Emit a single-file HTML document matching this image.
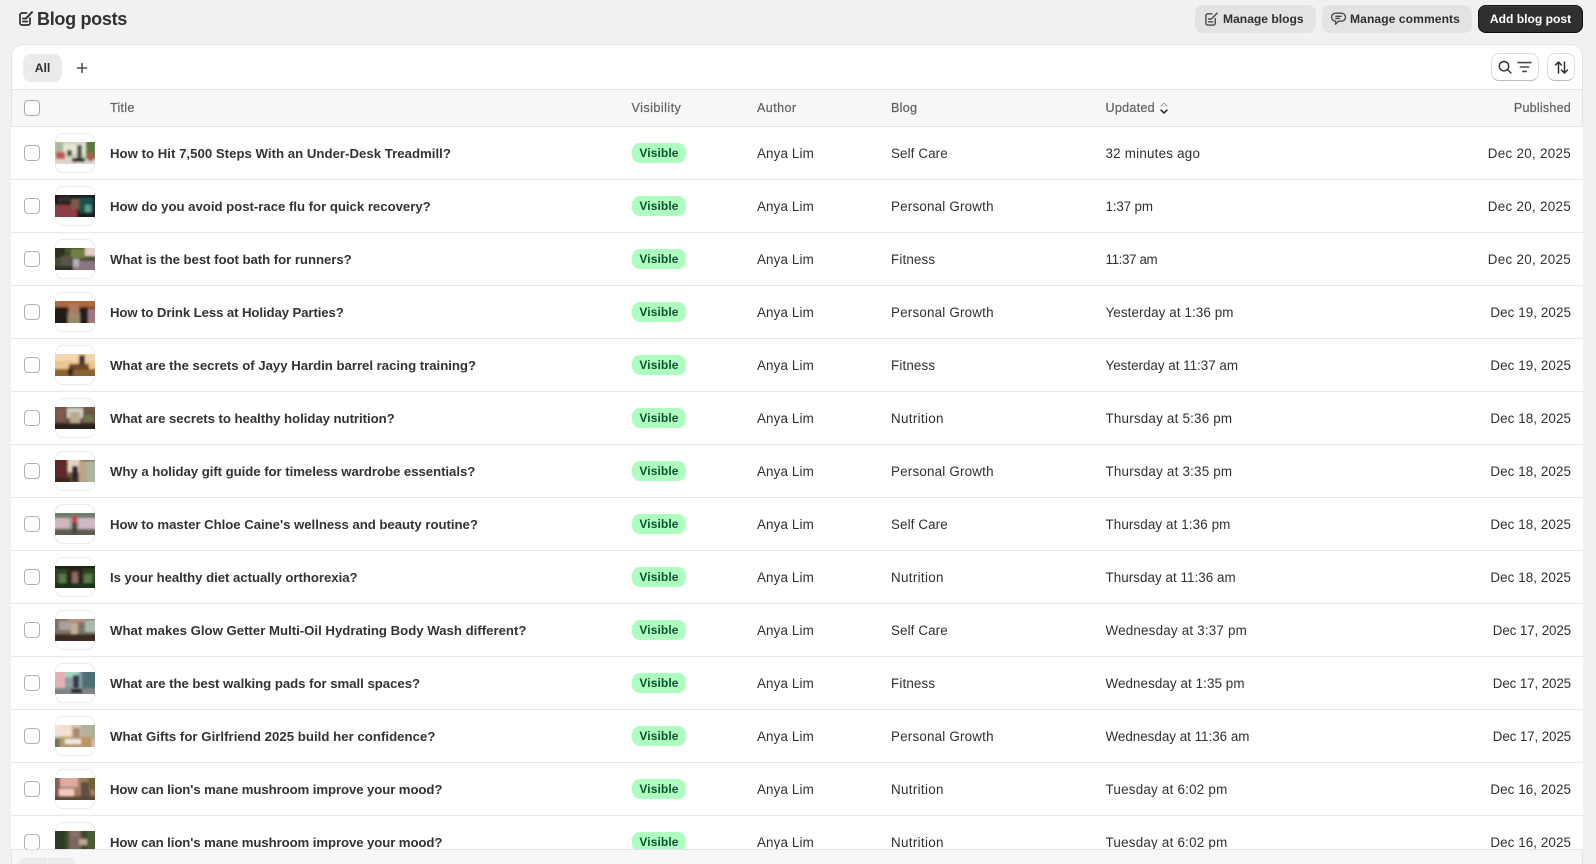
<!DOCTYPE html>
<html><head><meta charset="utf-8"><style>
*{box-sizing:border-box;margin:0;padding:0}
html,body{width:1596px;height:864px;overflow:hidden;background:#f1f1f1;font-family:"Liberation Sans",sans-serif;color:#303030}
#w{position:absolute;left:0;top:0;width:1596px;height:864px;overflow:hidden;background:#f1f1f1}
.abs{position:absolute;white-space:nowrap}
.card{position:absolute;left:11px;top:44px;width:1572px;height:830px;background:#fff;border:1px solid #e3e3e3;border-radius:12px;overflow:hidden}
.btn{position:absolute;top:5px;height:28px;border-radius:8px;background:#e3e3e3;font-size:12.1px;font-weight:bold;line-height:28px;color:#303030}
.row{position:absolute;left:11px;width:1572px;height:53px;border-bottom:1px solid #e8e8e8;background:#fff}
.cb{position:absolute;left:13px;top:18px;width:16px;height:16px;border:1px solid #b0b0b0;border-radius:4px;background:#fff}
.th{position:absolute;left:44px;top:6px;width:40px;height:40px;border:1px solid #ebebeb;border-radius:8px;background:#fff}
.th svg{position:absolute;left:-1px;top:8px;width:40px;height:22px;display:block}
.t{position:absolute;left:99px;top:18px;font-size:13.2px;font-weight:bold;line-height:17px;white-space:nowrap;color:#333;letter-spacing:-.03px}
.bd{position:absolute;left:621px;top:16px;width:54px;height:20px;border-radius:8px;background:#aefebf;color:#0c5132;font-size:12px;font-weight:bold;line-height:20.5px;text-align:center;letter-spacing:.1px}
.c{position:absolute;top:18px;font-size:13.4px;line-height:17px;white-space:nowrap;letter-spacing:.2px}
.au{left:746px;letter-spacing:.13px}.bl{left:880px}.up{left:1094.5px}
.pb{position:absolute;right:12px;left:auto;letter-spacing:.08px}
.h{position:absolute;top:100px;font-size:12.6px;line-height:16px;color:#616161;letter-spacing:.25px;white-space:nowrap;-webkit-text-stroke:.2px #616161}
</style></head><body><div id="w">
<svg width="0" height="0" style="position:absolute"><defs><filter id="b" x="-10%" y="-10%" width="120%" height="120%"><feGaussianBlur stdDeviation="1"/></filter></defs></svg>

<svg class="abs" style="left:18px;top:10px" width="16" height="17" viewBox="0 0 16 17" fill="none" stroke="#303030" stroke-width="1.7" stroke-linecap="round"><path d="M8.5 3H4a2 2 0 0 0-2 2v8a2 2 0 0 0 2 2h6a2 2 0 0 0 2-2V8"/><path d="M4.8 8.5h2.5M4.8 11.5h4.5"/><path d="M8 8.4 14 2.2" stroke-width="2"/></svg>
<div class="abs" style="left:37px;top:8px;font-size:18px;font-weight:bold;line-height:23px;letter-spacing:-.3px">Blog posts</div>

<div class="btn" style="left:1195px;width:121px"><svg class="abs" style="left:9px;top:6px" width="15" height="16" viewBox="0 0 16 17" fill="none" stroke="#4a4a4a" stroke-width="1.5" stroke-linecap="round"><path d="M8.5 3H4a2 2 0 0 0-2 2v8a2 2 0 0 0 2 2h6a2 2 0 0 0 2-2V8"/><path d="M4.8 8.5h2.5M4.8 11.5h4.5"/><path d="M8 8.4 14 2.2"/></svg><span class="abs" style="left:28px">Manage blogs</span></div>
<div class="btn" style="left:1322px;width:150px"><svg class="abs" style="left:9px;top:7px" width="15" height="14" viewBox="0 0 15 14" fill="none" stroke="#4a4a4a" stroke-width="1.4" stroke-linecap="round" stroke-linejoin="round"><path d="M4.5 1.2h6a3.5 3.5 0 0 1 0 8H7.5L4.6 12.2V9.1A3.5 3.5 0 0 1 4.5 1.2Z"/><path d="M4.8 4.3h5.4M4.8 6.4h3.6"/></svg><span class="abs" style="left:28px;letter-spacing:.07px">Manage comments</span></div>
<div class="btn" style="left:1478px;width:105px;background:#303030;color:#fff;box-shadow:inset 0 0 0 1px #111,inset 0 1.5px 0 #555;text-align:center">Add blog post</div>

<div class="card"></div>
<div class="abs" style="left:23px;top:54px;width:39px;height:28px;border-radius:8px;background:#ebebeb;font-size:12.2px;font-weight:bold;line-height:29px;text-align:center">All</div>
<svg class="abs" style="left:76px;top:62px" width="12" height="12" viewBox="0 0 12 12" stroke="#4a4a4a" stroke-width="1.5" stroke-linecap="round"><path d="M6 1.5v9M1.5 6h9"/></svg>

<div class="abs" style="left:1491px;top:53px;width:48px;height:28px;background:#fff;border:1px solid #dcdcdc;border-bottom-color:#bdbdbd;border-radius:8px"><svg class="abs" style="left:5px;top:6px" width="36" height="15" viewBox="0 0 36 15" fill="none" stroke="#303030" stroke-width="1.4" stroke-linecap="round"><circle cx="7" cy="6.2" r="4.7"/><path d="M10.6 9.8 14 13"/><path d="M21 2.6h13M23.4 7h8.2M25.8 11.4h3.4" stroke="#4a4a4a" stroke-width="1.6"/></svg></div>
<div class="abs" style="left:1547px;top:53px;width:28px;height:28px;background:#fff;border:1px solid #dcdcdc;border-bottom-color:#bdbdbd;border-radius:8px"><svg class="abs" style="left:6px;top:6px" width="15" height="15" viewBox="0 0 15 15" fill="none" stroke="#303030" stroke-width="1.5" stroke-linecap="round" stroke-linejoin="round"><path d="M4.5 13V2M1.5 5l3-3 3 3M10.5 2v11M7.5 10l3 3 3-3"/></svg></div>

<div class="abs" style="left:12px;top:89px;width:1570px;height:38px;background:#f7f7f7;border-top:1px solid #e3e3e3;border-bottom:1px solid #e3e3e3"></div>
<div class="abs" style="left:24px;top:100px;width:16px;height:16px;border:1px solid #a8a8a8;border-radius:4px;background:#fff"></div>
<div class="h" style="left:110px">Title</div>
<div class="h" style="left:631.5px;letter-spacing:.45px">Visibility</div>
<div class="h" style="left:757px;letter-spacing:.4px">Author</div>
<div class="h" style="left:891px">Blog</div>
<div class="h" style="left:1105.5px">Updated</div>
<svg class="abs" style="left:1159px;top:101px" width="10" height="14" viewBox="0 0 10 14" fill="none" stroke-linecap="round" stroke-linejoin="round"><path d="M2 5l3-3 3 3" stroke="#a0a0a0" stroke-width="1.1"/><path d="M2 9l3 3 3-3" stroke="#202020" stroke-width="1.5"/></svg>
<div class="h" style="right:25px;letter-spacing:.2px">Published</div>

<div class="row" style="top:127px"><div class="cb"></div><div class="th"><svg viewBox="0 0 40 22"><g filter="url(#b)"><rect x="-4" y="-4" width="48" height="30" fill="#cfd4bd"/><rect width="8" height="14" fill="#a9b89a"/><rect x="8" y="2" width="22" height="10" fill="#e4e4d4"/><rect x="31" y="-2" width="10" height="24" fill="#557a3e"/><rect x="1" y="10" width="9" height="8" fill="#c4554f"/><rect x="-2" y="17" width="44" height="7" fill="#ddd5cc"/><rect x="17" y="16" width="13" height="4" fill="#2a2a2a"/><rect x="22" y="3" width="5" height="13" fill="#4d5a44"/><rect x="12" y="8" width="5" height="6" fill="#3f5a3a"/><rect x="33" y="11" width="5" height="8" fill="#b9524c"/></g></svg></div><div class="t" style="letter-spacing:.02px">How to Hit 7,500 Steps With an Under-Desk Treadmill?</div><div class="bd">Visible</div><div class="c au">Anya Lim</div><div class="c bl" style="letter-spacing:.11px">Self Care</div><div class="c up" style="letter-spacing:.22px">32 minutes ago</div><div class="c pb" style="letter-spacing:.3px">Dec 20, 2025</div></div>

<div class="row" style="top:180px"><div class="cb"></div><div class="th"><svg viewBox="0 0 40 22"><g filter="url(#b)"><rect x="-4" y="-4" width="48" height="30" fill="#1e1a1c"/><rect x="-2" y="10" width="24" height="14" fill="#8c3e44"/><rect x="24" y="3" width="14" height="15" fill="#1c4f48"/><rect x="16" y="4" width="8" height="10" fill="#7d5a4c"/><rect x="3" y="2" width="12" height="5" fill="#3a2a30"/><rect x="30" y="10" width="6" height="7" fill="#5fa090"/></g></svg></div><div class="t" style="letter-spacing:-.02px">How do you avoid post-race flu for quick recovery?</div><div class="bd">Visible</div><div class="c au">Anya Lim</div><div class="c bl">Personal Growth</div><div class="c up" style="letter-spacing:-.15px">1:37 pm</div><div class="c pb" style="letter-spacing:.3px">Dec 20, 2025</div></div>

<div class="row" style="top:233px"><div class="cb"></div><div class="th"><svg viewBox="0 0 40 22"><g filter="url(#b)"><rect x="-4" y="-4" width="48" height="30" fill="#46502e"/><rect x="30" y="-2" width="12" height="10" fill="#e2cfc6"/><rect x="-2" y="-2" width="12" height="12" fill="#2e3320"/><rect x="16" y="1" width="14" height="9" fill="#6f8044"/><rect x="18" y="13" width="24" height="11" fill="#8a7484"/><rect x="6" y="8" width="10" height="10" fill="#5c5550"/><rect x="18" y="11" width="6" height="8" fill="#b4b0b4"/><rect x="-2" y="18" width="20" height="6" fill="#2c3020"/></g></svg></div><div class="t" style="letter-spacing:-.04px">What is the best foot bath for runners?</div><div class="bd">Visible</div><div class="c au">Anya Lim</div><div class="c bl" style="letter-spacing:.15px">Fitness</div><div class="c up" style="letter-spacing:-.38px">11:37 am</div><div class="c pb" style="letter-spacing:.3px">Dec 20, 2025</div></div>

<div class="row" style="top:286px"><div class="cb"></div><div class="th"><svg viewBox="0 0 40 22"><g filter="url(#b)"><rect x="-4" y="-4" width="48" height="30" fill="#6a3420"/><rect x="-2" y="-2" width="44" height="8" fill="#b06a40"/><rect x="-2" y="6" width="14" height="18" fill="#221c18"/><rect x="25" y="6" width="8" height="18" fill="#241c1c"/><rect x="33" y="8" width="9" height="16" fill="#a07a80"/><rect x="14" y="3" width="10" height="9" fill="#b07a5c"/><rect x="13" y="12" width="12" height="12" fill="#988a6a"/></g></svg></div><div class="t" style="letter-spacing:-.1px">How to Drink Less at Holiday Parties?</div><div class="bd">Visible</div><div class="c au">Anya Lim</div><div class="c bl">Personal Growth</div><div class="c up" style="letter-spacing:.1px">Yesterday at 1:36 pm</div><div class="c pb">Dec 19, 2025</div></div>

<div class="row" style="top:339px"><div class="cb"></div><div class="th"><svg viewBox="0 0 40 22"><g filter="url(#b)"><rect x="-4" y="-4" width="48" height="30" fill="#edc48f"/><rect x="-2" y="-2" width="44" height="9" fill="#f3d7ae"/><rect x="-2" y="15" width="44" height="9" fill="#8a6234"/><rect x="14" y="10" width="20" height="6" fill="#6f4a2c"/><rect x="13" y="14" width="5" height="8" fill="#39291f"/><rect x="24" y="1" width="6" height="10" fill="#4f3330"/></g></svg></div><div class="t" style="letter-spacing:-.02px">What are the secrets of Jayy Hardin barrel racing training?</div><div class="bd">Visible</div><div class="c au">Anya Lim</div><div class="c bl" style="letter-spacing:.15px">Fitness</div><div class="c up" style="letter-spacing:0">Yesterday at 11:37 am</div><div class="c pb">Dec 19, 2025</div></div>

<div class="row" style="top:392px"><div class="cb"></div><div class="th"><svg viewBox="0 0 40 22"><g filter="url(#b)"><rect x="-4" y="-4" width="48" height="30" fill="#6e5544"/><rect x="12" y="1" width="16" height="10" fill="#cfcfc6"/><rect x="15" y="5" width="10" height="11" fill="#bda88c"/><rect x="30" y="8" width="8" height="7" fill="#66784c"/><rect x="-2" y="16" width="44" height="8" fill="#2c221a"/><rect x="2" y="2" width="7" height="12" fill="#8a5a4a"/></g></svg></div><div class="t" style="letter-spacing:-.04px">What are secrets to healthy holiday nutrition?</div><div class="bd">Visible</div><div class="c au">Anya Lim</div><div class="c bl" style="letter-spacing:.33px">Nutrition</div><div class="c up" style="letter-spacing:.21px">Thursday at 5:36 pm</div><div class="c pb">Dec 18, 2025</div></div>

<div class="row" style="top:445px"><div class="cb"></div><div class="th"><svg viewBox="0 0 40 22"><g filter="url(#b)"><rect x="-4" y="-4" width="48" height="30" fill="#7c5a44"/><rect x="-2" y="-2" width="14" height="26" fill="#5e2c26"/><rect x="13" y="-2" width="12" height="14" fill="#e3d6c2"/><rect x="24" y="1" width="8" height="23" fill="#bda488"/><rect x="32" y="1" width="10" height="23" fill="#a8b8a0"/><rect x="17" y="6" width="6" height="16" fill="#28282e"/><rect x="-2" y="17" width="18" height="7" fill="#3a2a1e"/></g></svg></div><div class="t" style="letter-spacing:-.045px">Why a holiday gift guide for timeless wardrobe essentials?</div><div class="bd">Visible</div><div class="c au">Anya Lim</div><div class="c bl">Personal Growth</div><div class="c up" style="letter-spacing:.21px">Thursday at 3:35 pm</div><div class="c pb">Dec 18, 2025</div></div>

<div class="row" style="top:498px"><div class="cb"></div><div class="th"><svg viewBox="0 0 40 22"><g filter="url(#b)"><rect x="-4" y="-4" width="48" height="30" fill="#a8a49c"/><rect x="-2" y="-2" width="44" height="7" fill="#6e7c6c"/><rect x="-2" y="5" width="16" height="10" fill="#d2b8bc"/><rect x="24" y="5" width="18" height="11" fill="#d0b8c4"/><rect x="-2" y="16" width="44" height="8" fill="#5e5c50"/><rect x="17" y="6" width="5" height="15" fill="#4c4440"/><rect x="17" y="3" width="5" height="7" fill="#c83c48"/></g></svg></div><div class="t">How to master Chloe Caine's wellness and beauty routine?</div><div class="bd">Visible</div><div class="c au">Anya Lim</div><div class="c bl" style="letter-spacing:.11px">Self Care</div><div class="c up" style="letter-spacing:.11px">Thursday at 1:36 pm</div><div class="c pb">Dec 18, 2025</div></div>

<div class="row" style="top:551px"><div class="cb"></div><div class="th"><svg viewBox="0 0 40 22"><g filter="url(#b)"><rect x="-4" y="-4" width="48" height="30" fill="#2c4a22"/><rect x="-2" y="-2" width="44" height="5" fill="#1a2416"/><rect x="12" y="3" width="16" height="14" fill="#2e261e"/><rect x="17" y="6" width="6" height="11" fill="#8c6c60"/><rect x="-2" y="17" width="44" height="7" fill="#1e3016"/><rect x="4" y="8" width="7" height="9" fill="#5c7a48"/><rect x="29" y="8" width="8" height="9" fill="#5c7a48"/></g></svg></div><div class="t" style="letter-spacing:-.04px">Is your healthy diet actually orthorexia?</div><div class="bd">Visible</div><div class="c au">Anya Lim</div><div class="c bl" style="letter-spacing:.33px">Nutrition</div><div class="c up" style="letter-spacing:.05px">Thursday at 11:36 am</div><div class="c pb">Dec 18, 2025</div></div>

<div class="row" style="top:604px"><div class="cb"></div><div class="th"><svg viewBox="0 0 40 22"><g filter="url(#b)"><rect x="-4" y="-4" width="48" height="30" fill="#7c7268"/><rect x="4" y="2" width="12" height="9" fill="#a8a29c"/><rect x="14" y="-2" width="16" height="5" fill="#c09088"/><rect x="30" y="1" width="12" height="12" fill="#a8bcac"/><rect x="16" y="4" width="7" height="14" fill="#c4ae96"/><rect x="-2" y="15" width="44" height="9" fill="#3c2c22"/></g></svg></div><div class="t" style="letter-spacing:0">What makes Glow Getter Multi-Oil Hydrating Body Wash different?</div><div class="bd">Visible</div><div class="c au">Anya Lim</div><div class="c bl" style="letter-spacing:.11px">Self Care</div><div class="c up" style="letter-spacing:.2px">Wednesday at 3:37 pm</div><div class="c pb" style="letter-spacing:-.12px">Dec 17, 2025</div></div>

<div class="row" style="top:657px"><div class="cb"></div><div class="th"><svg viewBox="0 0 40 22"><g filter="url(#b)"><rect x="-4" y="-4" width="48" height="30" fill="#8a9ea0"/><rect x="-2" y="-2" width="12" height="18" fill="#e4b0b8"/><rect x="10" y="-2" width="14" height="7" fill="#a8d8c0"/><rect x="27" y="-2" width="15" height="20" fill="#4e6e74"/><rect x="18" y="3" width="6" height="15" fill="#2c3a48"/><rect x="-2" y="16" width="44" height="8" fill="#7e8488"/><rect x="16" y="17" width="11" height="4" fill="#1e2022"/></g></svg></div><div class="t">What are the best walking pads for small spaces?</div><div class="bd">Visible</div><div class="c au">Anya Lim</div><div class="c bl" style="letter-spacing:.15px">Fitness</div><div class="c up" style="letter-spacing:.08px">Wednesday at 1:35 pm</div><div class="c pb" style="letter-spacing:-.12px">Dec 17, 2025</div></div>

<div class="row" style="top:710px"><div class="cb"></div><div class="th"><svg viewBox="0 0 40 22"><g filter="url(#b)"><rect x="-4" y="-4" width="48" height="30" fill="#d8c4ae"/><rect x="-2" y="-2" width="18" height="13" fill="#f2e2d4"/><rect x="26" y="-2" width="16" height="16" fill="#b0b29e"/><rect x="18" y="3" width="7" height="10" fill="#a88a70"/><rect x="5" y="12" width="32" height="12" fill="#bc9868"/><rect x="10" y="14" width="16" height="5" fill="#e8ece8"/><rect x="-2" y="13" width="7" height="11" fill="#6c7860"/></g></svg></div><div class="t" style="letter-spacing:.03px">What Gifts for Girlfriend 2025 build her confidence?</div><div class="bd">Visible</div><div class="c au">Anya Lim</div><div class="c bl">Personal Growth</div><div class="c up" style="letter-spacing:0">Wednesday at 11:36 am</div><div class="c pb" style="letter-spacing:-.12px">Dec 17, 2025</div></div>

<div class="row" style="top:763px"><div class="cb"></div><div class="th"><svg viewBox="0 0 40 22"><g filter="url(#b)"><rect x="-4" y="-4" width="48" height="30" fill="#a07c60"/><rect x="5" y="-2" width="18" height="11" fill="#e0a8a0"/><rect x="-2" y="-2" width="7" height="26" fill="#8a5c4c"/><rect x="4" y="11" width="15" height="7" fill="#f2ccc4"/><rect x="26" y="4" width="9" height="14" fill="#5e5044"/><rect x="-2" y="18" width="44" height="6" fill="#5c4a30"/><rect x="33" y="-2" width="9" height="14" fill="#6e6038"/></g></svg></div><div class="t" style="letter-spacing:-.09px">How can lion's mane mushroom improve your mood?</div><div class="bd">Visible</div><div class="c au">Anya Lim</div><div class="c bl" style="letter-spacing:.33px">Nutrition</div><div class="c up" style="letter-spacing:.23px">Tuesday at 6:02 pm</div><div class="c pb">Dec 16, 2025</div></div>

<div class="row" style="top:816px"><div class="cb"></div><div class="th"><svg viewBox="0 0 40 22"><g filter="url(#b)"><rect x="-4" y="-4" width="48" height="30" fill="#3e4c2c"/><rect x="14" y="-2" width="12" height="26" fill="#7c6660"/><rect x="24" y="8" width="8" height="6" fill="#c0a890"/><rect x="-2" y="-2" width="12" height="26" fill="#2c3a20"/><rect x="32" y="-2" width="10" height="26" fill="#4a5a34"/><rect x="16" y="-2" width="8" height="8" fill="#8c7064"/></g></svg></div><div class="t" style="letter-spacing:-.09px">How can lion's mane mushroom improve your mood?</div><div class="bd">Visible</div><div class="c au">Anya Lim</div><div class="c bl" style="letter-spacing:.33px">Nutrition</div><div class="c up" style="letter-spacing:.23px">Tuesday at 6:02 pm</div><div class="c pb">Dec 16, 2025</div></div>

<div class="abs" style="left:11px;top:849px;width:1572px;height:15px;background:#f7f7f7;border-top:1px solid #e3e3e3;border-left:1px solid #e3e3e3;border-right:1px solid #e3e3e3"></div>
<div class="abs" style="left:19px;top:858px;width:28px;height:6px;background:#ebebeb;border-radius:8px 0 0 0"></div>
<div class="abs" style="left:48px;top:858px;width:28px;height:6px;background:#ebebeb;border-radius:0 8px 0 0"></div>
</div></body></html>
